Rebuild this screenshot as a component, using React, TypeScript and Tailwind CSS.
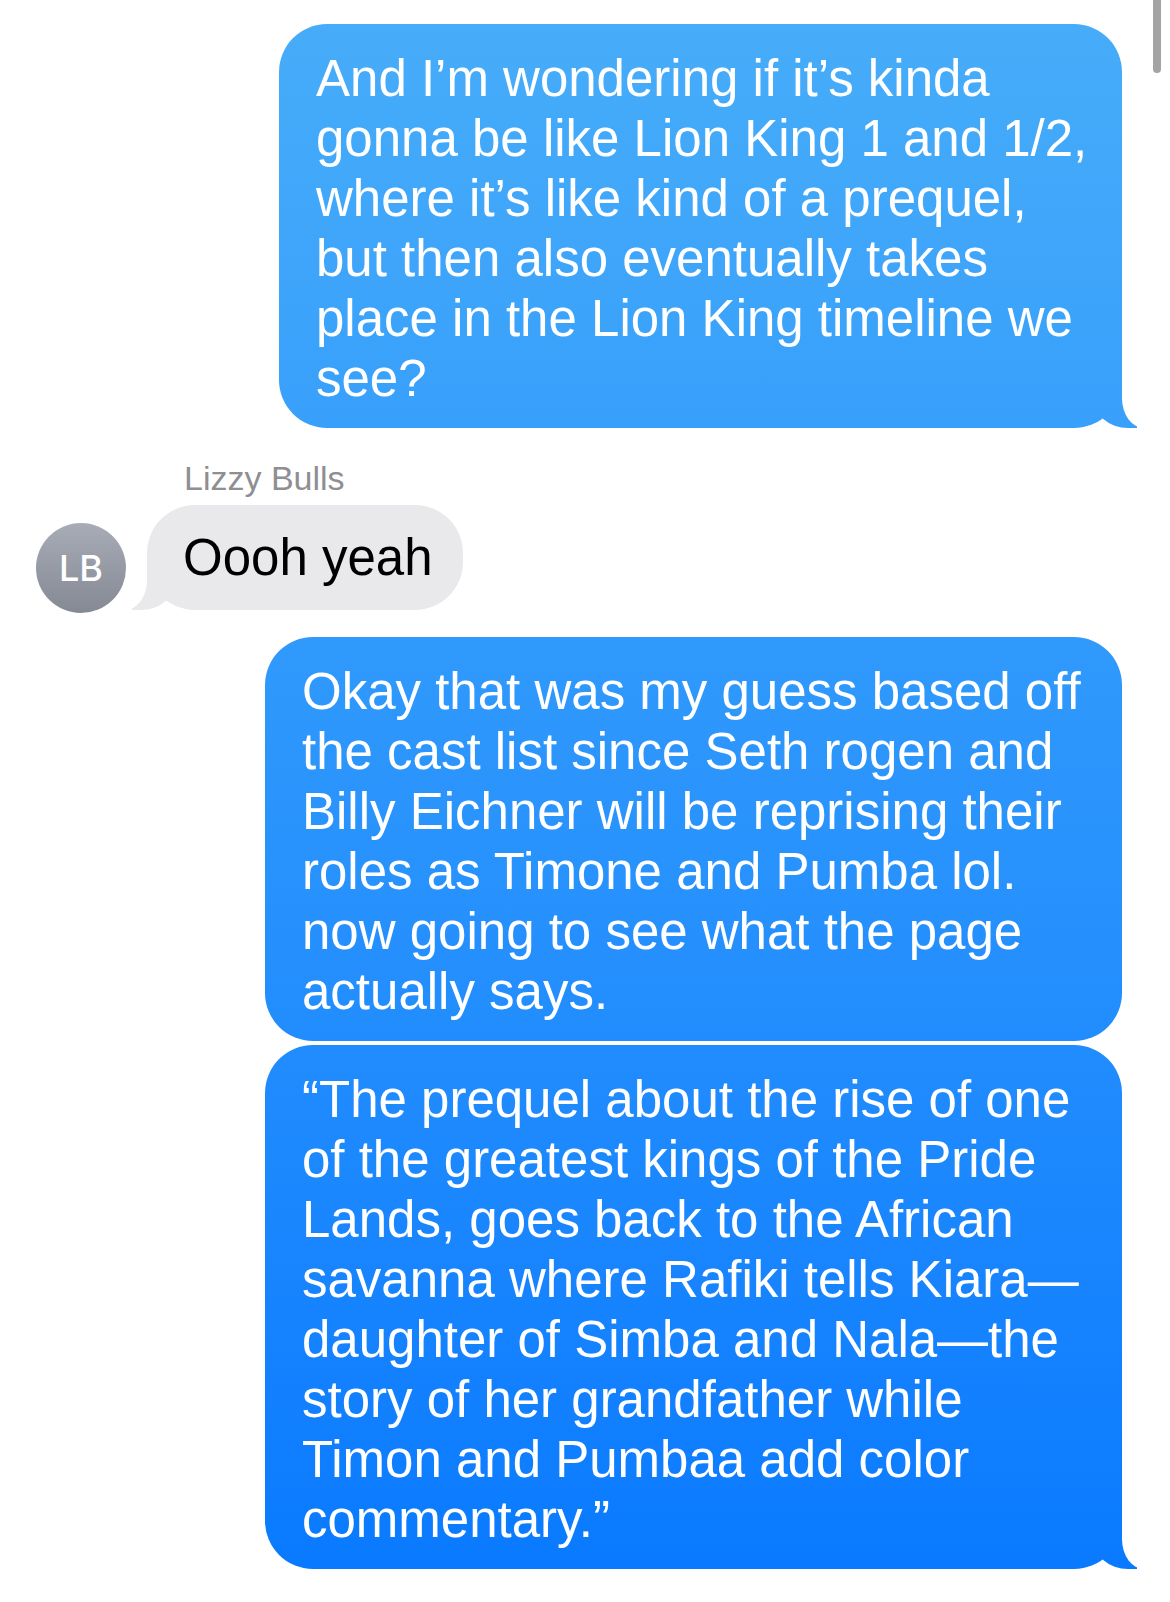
import React from 'react';

const sentLines1 = [
  'And I’m wondering if it’s kinda',
  'gonna be like Lion King 1 and 1/2,',
  'where it’s like kind of a prequel,',
  'but then also eventually takes',
  'place in the Lion King timeline we',
  'see?',
];

const sentLines2 = [
  'Okay that was my guess based off',
  'the cast list since Seth rogen and',
  'Billy Eichner will be reprising their',
  'roles as Timone and Pumba lol.',
  'now going to see what the page',
  'actually says.',
];

const sentLines3 = [
  '“The prequel about the rise of one',
  'of the greatest kings of the Pride',
  'Lands, goes back to the African',
  'savanna where Rafiki tells Kiara—',
  'daughter of Simba and Nala—the',
  'story of her grandfather while',
  'Timon and Pumbaa add color',
  'commentary.”',
];

const blueFill = 'bg-fixed bg-linear-to-b from-[#47adf9] to-[#0779ff]';

const Lines = ({ lines }: { lines: string[] }) => (
  <div className="relative">
    {lines.map((l, i) => (
      <span key={i} className="block whitespace-nowrap">{l}</span>
    ))}
  </div>
);

const SentBubble = ({ lines, width, tail }: { lines: string[]; width: string; tail?: boolean }) => (
  <div className="flex justify-end pr-[48px]">
    <div className={`relative ${width} rounded-[48px] ${blueFill} pl-[37px] pt-[25px] pb-[19px] text-[51px] leading-[60px] text-white`}>
      {tail && (
        <>
          <div className={`absolute bottom-0 right-[-15px] h-[55px] w-[44px] rounded-bl-[35px_31px] ${blueFill}`} />
          <div className="absolute bottom-0 right-[-57px] h-[55px] w-[57px] rounded-bl-[22px_30px] bg-white" />
        </>
      )}
      <Lines lines={lines} />
    </div>
  </div>
);

export default function App() {
  return (
    <div className="relative h-[1602px] w-[1170px] overflow-hidden bg-white font-['Liberation_Sans',Arial,sans-serif]">
      {/* scroll indicator */}
      <div className="absolute right-[9px] top-0 z-20 h-[73px] w-[8px] rounded-b-full bg-[#a4a4a4]" />

      <div className="flex flex-col pt-[24px]">
        <SentBubble lines={sentLines1} width="w-[843px]" tail />

        <div className="mt-[30px] flex flex-col">
          <div className="pl-[184px] text-[34px] leading-[40px] text-[#8e8e93]">Lizzy Bulls</div>
          <div className="mt-[7px] flex items-end pl-[36px]">
            <div className="relative z-10 -mb-[3px] flex h-[90px] w-[90px] items-center justify-center rounded-full bg-linear-to-b from-[#a8acb6] to-[#858993] font-['Inter',sans-serif] text-[36px] font-medium text-white">
              LB
            </div>
            <div className="relative ml-[21px] rounded-[48px] bg-[#e9e9eb] pl-[36px] pr-[30px] pt-[23px] pb-[22px] text-[51px] leading-[60px] text-black">
              <div className="absolute bottom-0 left-[-15px] h-[55px] w-[44px] rounded-br-[35px_31px] bg-[#e9e9eb]" />
              <div className="absolute bottom-0 left-[-57px] h-[55px] w-[57px] rounded-br-[22px_30px] bg-white" />
              <span className="relative whitespace-nowrap">Oooh yeah</span>
            </div>
          </div>
        </div>

        <div className="mt-[27px]">
          <SentBubble lines={sentLines2} width="w-[857px]" />
        </div>
        <div className="mt-[4px]">
          <SentBubble lines={sentLines3} width="w-[857px]" tail />
        </div>
      </div>
    </div>
  );
}
